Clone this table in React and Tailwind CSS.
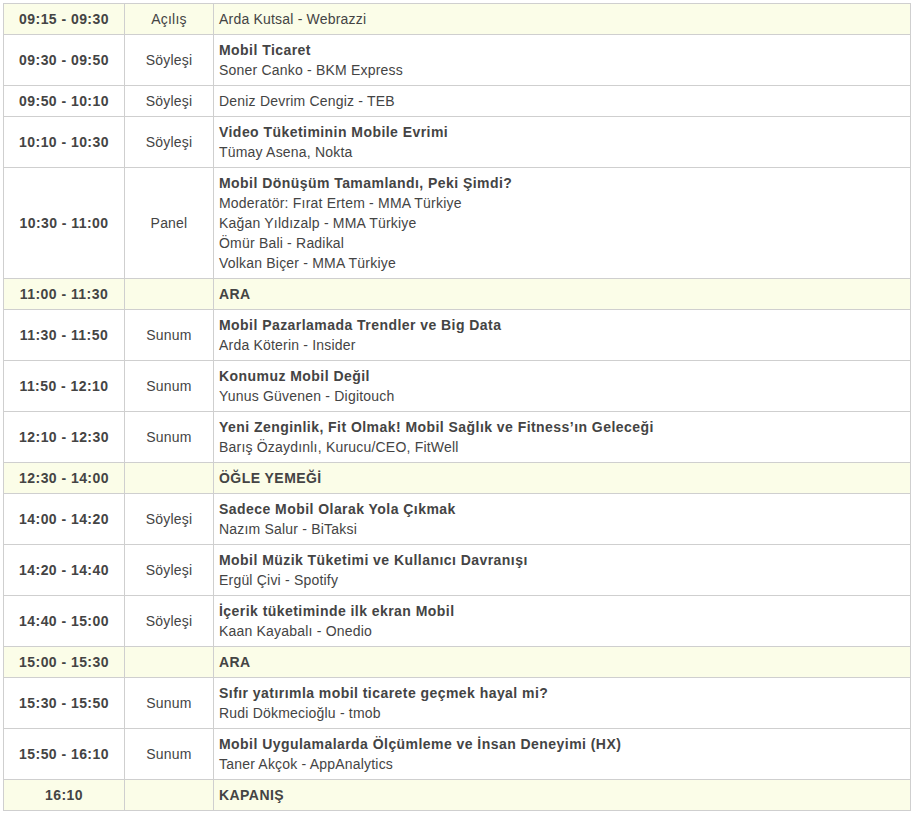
const rows = [
  { time: '09:15 - 09:30', type: 'Açılış', lines: ['Arda Kutsal - Webrazzi'], hl: true },
  { time: '09:30 - 09:50', type: 'Söyleşi', title: 'Mobil Ticaret', lines: ['Soner Canko - BKM Express'] },
  { time: '09:50 - 10:10', type: 'Söyleşi', lines: ['Deniz Devrim Cengiz - TEB'] },
  { time: '10:10 - 10:30', type: 'Söyleşi', title: 'Video Tüketiminin Mobile Evrimi', lines: ['Tümay Asena, Nokta'] },
  {
    time: '10:30 - 11:00',
    type: 'Panel',
    title: 'Mobil Dönüşüm Tamamlandı, Peki Şimdi?',
    lines: [
      'Moderatör: Fırat Ertem - MMA Türkiye',
      'Kağan Yıldızalp - MMA Türkiye',
      'Ömür Bali - Radikal',
      'Volkan Biçer - MMA Türkiye',
    ],
  },
  { time: '11:00 - 11:30', type: '', title: 'ARA', lines: [], hl: true },
  { time: '11:30 - 11:50', type: 'Sunum', title: 'Mobil Pazarlamada Trendler ve Big Data', lines: ['Arda Köterin - Insider'] },
  { time: '11:50 - 12:10', type: 'Sunum', title: 'Konumuz Mobil Değil', lines: ['Yunus Güvenen - Digitouch'] },
  {
    time: '12:10 - 12:30',
    type: 'Sunum',
    title: 'Yeni Zenginlik, Fit Olmak! Mobil Sağlık ve Fitness’ın Geleceği',
    lines: ['Barış Özaydınlı, Kurucu/CEO, FitWell'],
  },
  { time: '12:30 - 14:00', type: '', title: 'ÖĞLE YEMEĞİ', lines: [], hl: true },
  { time: '14:00 - 14:20', type: 'Söyleşi', title: 'Sadece Mobil Olarak Yola Çıkmak', lines: ['Nazım Salur - BiTaksi'] },
  { time: '14:20 - 14:40', type: 'Söyleşi', title: 'Mobil Müzik Tüketimi ve Kullanıcı Davranışı', lines: ['Ergül Çivi - Spotify'] },
  { time: '14:40 - 15:00', type: 'Söyleşi', title: 'İçerik tüketiminde ilk ekran Mobil', lines: ['Kaan Kayabalı - Onedio'] },
  { time: '15:00 - 15:30', type: '', title: 'ARA', lines: [], hl: true },
  { time: '15:30 - 15:50', type: 'Sunum', title: 'Sıfır yatırımla mobil ticarete geçmek hayal mi?', lines: ['Rudi Dökmecioğlu - tmob'] },
  {
    time: '15:50 - 16:10',
    type: 'Sunum',
    title: 'Mobil Uygulamalarda Ölçümleme ve İnsan Deneyimi (HX)',
    lines: ['Taner Akçok - AppAnalytics'],
  },
  { time: '16:10', type: '', title: 'KAPANIŞ', lines: [], hl: true },
]

// cell borders share one colour
const cell = 'border border-[#cfcfcf] px-[5px] py-[5px] align-middle'

export default function App() {
  return (
    <div className="min-h-[816px] bg-white pl-[3px] pt-[3px] font-['Liberation_Sans',Arial,sans-serif] text-[14px] leading-5 tracking-[0.2px] text-[#444]">
      <table className="w-[908px] border-collapse">
        <colgroup>
          <col className="w-[121px]" />
          <col className="w-[89px]" />
          <col />
        </colgroup>
        <tbody>
          {rows.map((r, i) => (
            <tr key={i} className={r.hl ? 'bg-[#fbfde8]' : 'bg-white'}>
              <td className={`${cell} text-center font-bold tracking-[0.45px]`}>{r.time}</td>
              <td className={`${cell} text-center`}>{r.type}</td>
              <td className={cell}>
                {r.title && <div className="font-bold tracking-[0.45px]">{r.title}</div>}
                {r.lines.map((l, j) => (
                  <div key={j}>{l}</div>
                ))}
              </td>
            </tr>
          ))}
        </tbody>
      </table>
    </div>
  )
}
